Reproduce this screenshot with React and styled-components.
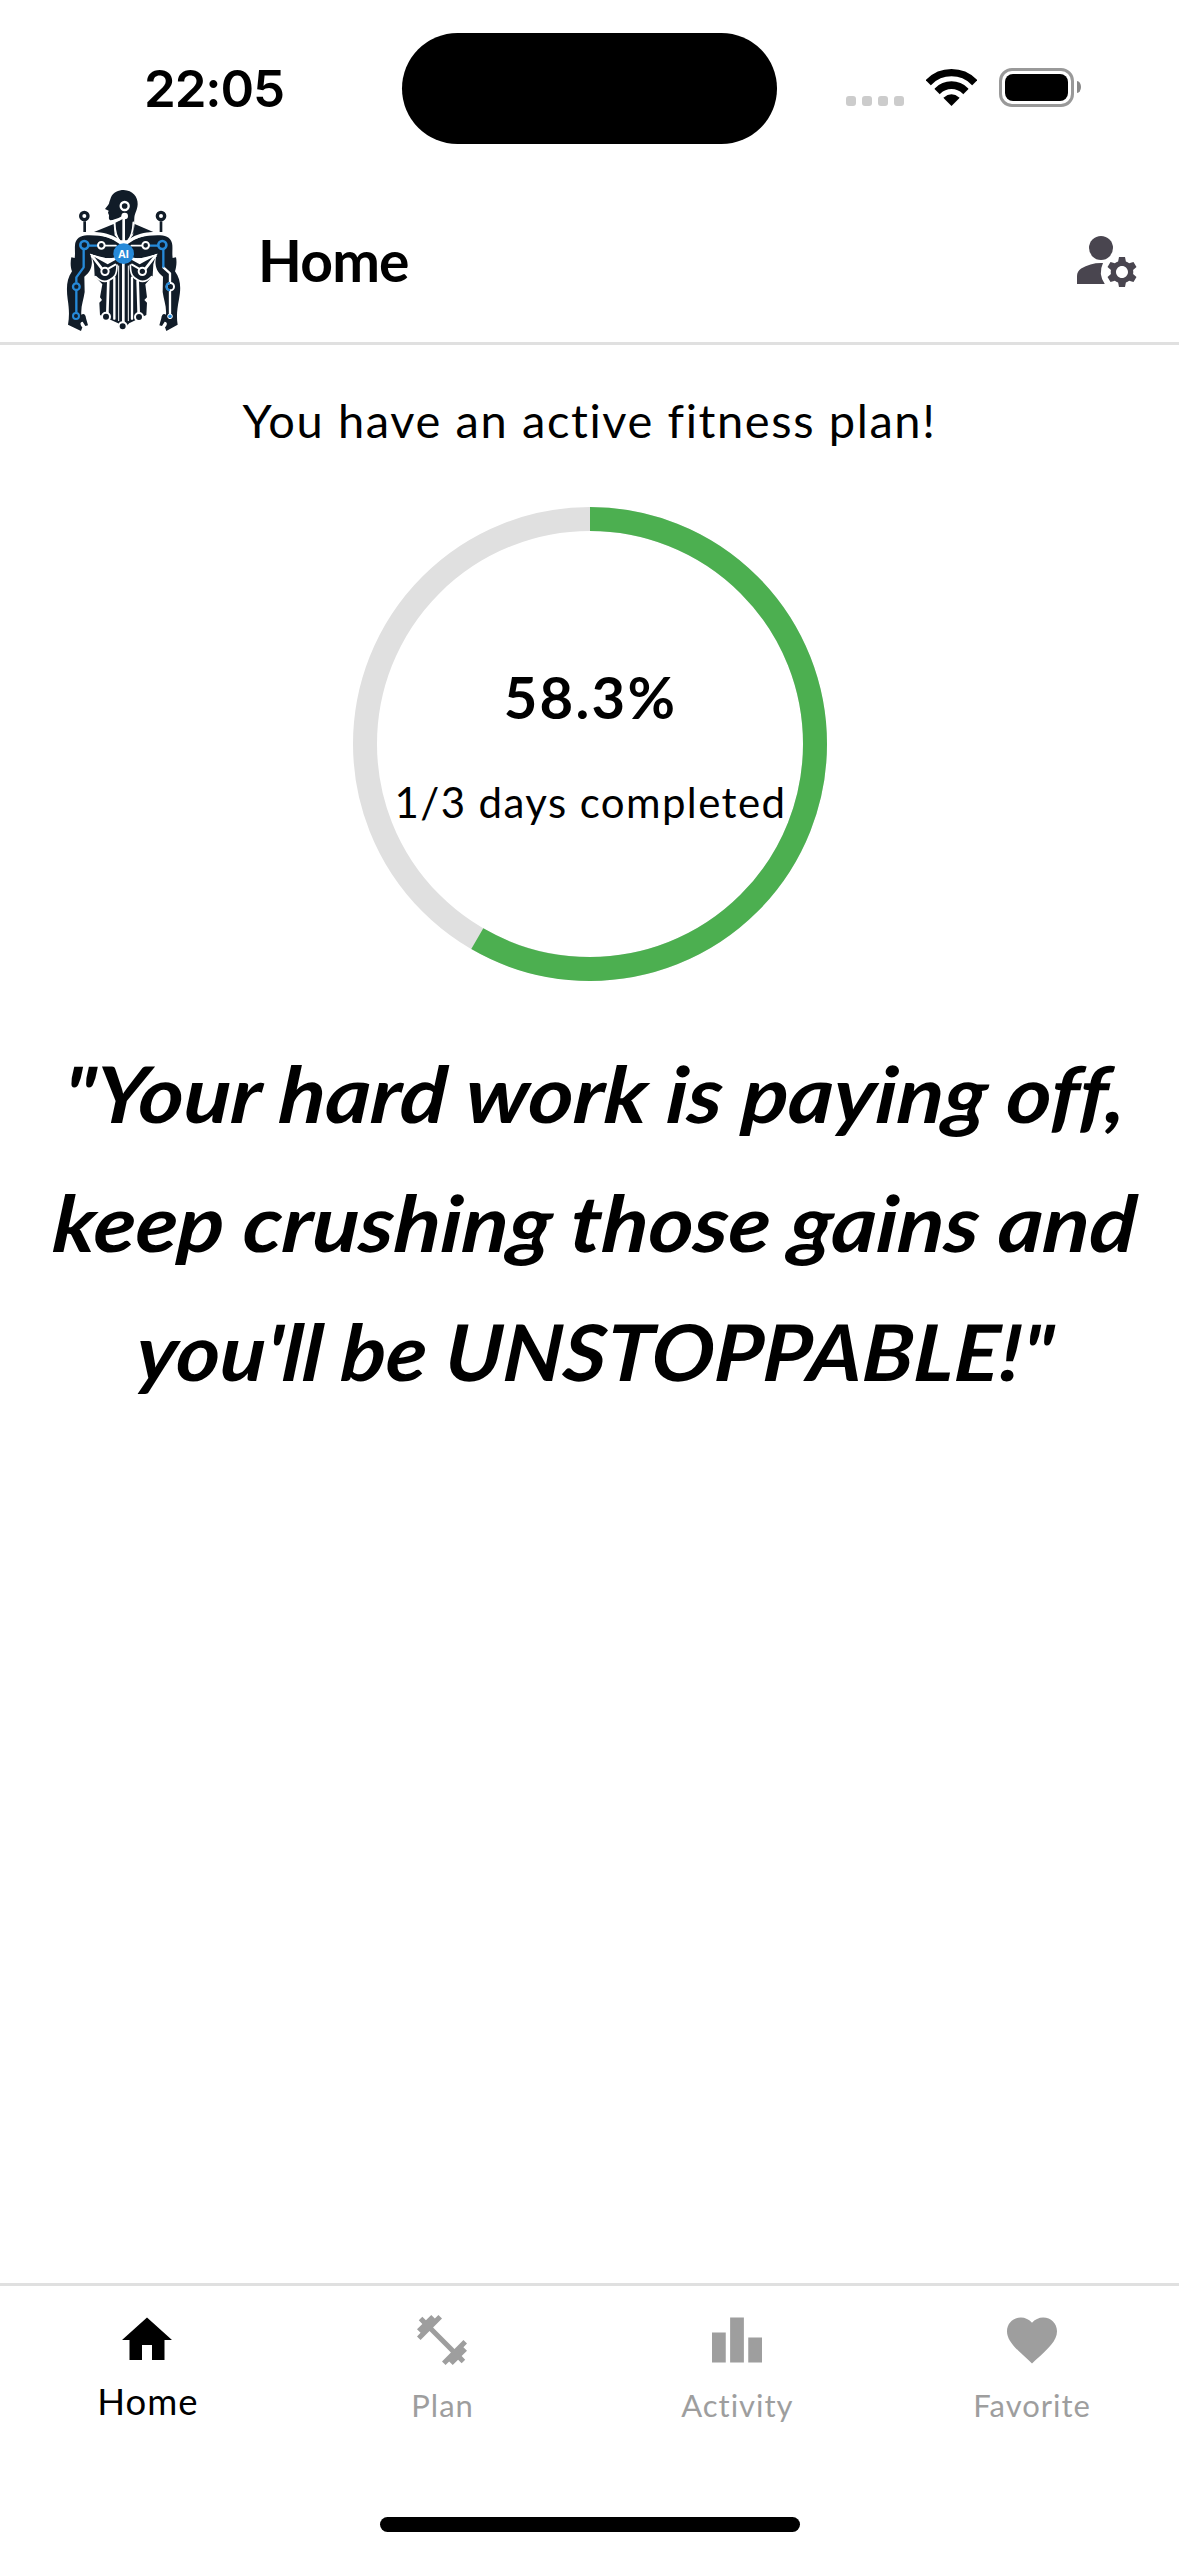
import React from "react";
import styled, { createGlobalStyle } from "styled-components";

const Global = createGlobalStyle`
  *, *::before, *::after { box-sizing: border-box; }
  html, body { margin: 0; padding: 0; background: #ffffff; }
  body { font-family: Lato, "Open Sans", sans-serif; color: #000000; }
`;

const Screen = styled.div`
  width: 1179px;
  height: 2556px;
  display: flex;
  flex-direction: column;
  background: #ffffff;
  overflow: hidden;
`;

const StatusBar = styled.div`
  flex: none;
  height: 177px;
  display: grid;
  grid-template-columns: 402px 375px 402px;
  align-items: start;
  padding-top: 33px;
`;

const Clock = styled.time`
  height: 111px;
  padding-left: 144px;
  font: 600 51px/111px Inter, sans-serif;
  letter-spacing: -1.1px;
`;

const Island = styled.div`
  height: 111px;
  border-radius: 56px;
  background: #000000;
`;

const StatusIcons = styled.div`
  height: 111px;
  display: flex;
  align-items: flex-start;
  padding: 35px 0 0 69px;
`;

const Dots = styled.div`
  display: flex;
  gap: 6px;
  margin: 28px 22px 0 0;
`;

const Dot = styled.i`
  width: 10px;
  height: 10px;
  border-radius: 3px;
  background: #cccccc;
`;

const WifiSvg = styled.svg`
  display: block;
  width: 51px;
  height: 39px;
  margin-right: 22px;
`;

const Battery = styled.div`
  width: 75px;
  height: 39px;
  padding: 3px;
  border: 3px solid #999999;
  border-radius: 13px;
`;

const BatteryFill = styled.div`
  height: 27px;
  border-radius: 8px;
  background: #000000;
`;

const BatteryCap = styled.div`
  width: 4px;
  height: 12px;
  margin: 13px 0 0 3px;
  border-radius: 0 4px 4px 0 / 0 6px 6px 0;
  background: #888888;
`;

const Header = styled.header`
  flex: none;
  height: 168px;
  display: flex;
  align-items: center;
  padding: 0 36px 0 40px;
  border-bottom: 3px solid #e0e0e0;
`;

const LogoSvg = styled.svg`
  display: block;
  width: 180px;
  height: 165px;
  flex: none;
`;

const Title = styled.h1`
  flex: 1;
  margin: 0 0 0 38px;
  font-size: 57px;
  line-height: 80px;
  font-weight: 700;
  letter-spacing: -0.8px;
`;

const AccountButton = styled.button`
  width: 72px;
  height: 72px;
  padding: 0;
  border: 0;
  background: none;
  color: #49454f;

  svg { display: block; width: 72px; height: 72px; fill: currentColor; }
`;

const Main = styled.main`
  flex: 1;
  display: flex;
  flex-direction: column;
  align-items: center;
  padding-top: 40px;
`;

const Lead = styled.p`
  margin: 0 0 52px;
  font-size: 47px;
  line-height: 70px;
  letter-spacing: 1.6px;
`;

const RingBox = styled.div`
  width: 474px;
  height: 474px;
  display: grid;
  place-items: center;

  > * { grid-area: 1 / 1; }
`;

const RingSvg = styled.svg`
  display: block;
  width: 474px;
  height: 474px;
`;

const RingText = styled.div`
  display: flex;
  flex-direction: column;
  align-items: center;
  gap: 31px;
`;

const Percent = styled.strong`
  font-size: 58px;
  line-height: 86px;
  font-weight: 700;
  letter-spacing: 2.3px;
  padding-left: 2px;
`;

const Days = styled.span`
  padding-left: 2px;
  font-size: 42px;
  line-height: 63px;
  letter-spacing: 1.4px;
  white-space: nowrap;
`;

const Quote = styled.blockquote`
  margin: 48px 0 0;
  padding-left: 12px;
  font-size: 78px;
  line-height: 129px;
  font-weight: 700;
  font-style: italic;
  text-align: center;
`;

const QuoteLine = styled.span`
  display: block;
  white-space: nowrap;
  font-variant-ligatures: none;
  transform: scaleX(${(p) => p.$stretch}) skewX(-4deg);
`;

const Nav = styled.nav`
  flex: none;
  height: 234px;
  display: grid;
  grid-template-columns: repeat(4, 1fr);
  border-top: 3px solid #e0e0e0;
`;

const NavItem = styled.a`
  display: flex;
  flex-direction: column;
  align-items: center;
  padding-top: 24px;
  color: ${(p) => (p.$active ? "#000000" : "#9e9e9e")};

  svg { display: block; width: 60px; height: 60px; fill: currentColor; }
`;

const NavLabel = styled.span`
  margin-top: 7px;
  padding-left: 1px;
  font-size: ${(p) => (p.$active ? 36.5 : 31)}px;
  line-height: ${(p) => (p.$active ? 48 : 56)}px;
  letter-spacing: 1px;
`;

const Indicator = styled.div`
  flex: none;
  align-self: center;
  width: 420px;
  height: 15px;
  margin: 0 0 24px;
  border-radius: 8px;
  background: #000000;
`;

const Wifi = () => (
  <WifiSvg viewBox="498 144 153 117" aria-hidden="true">
    <clipPath id="fan">
      <path d="M574.5 258 L440 124 H709 Z" />
    </clipPath>
    <g clipPath="url(#fan)" fill="none" stroke="#000">
      <circle cx="574.5" cy="254" r="96" strokeWidth="22" />
      <circle cx="574.5" cy="254" r="58.5" strokeWidth="23" />
      <circle cx="574.5" cy="254" r="31" fill="#000" stroke="none" />
    </g>
  </WifiSvg>
);

const INK = "#111c28";
const BLUE = "#2689d8";

const Logo = () => (
  <LogoSvg viewBox="0 21 540 495" aria-label="AI Fitness">
    <g fill={INK}>
      <path d="M213 82 C219 66 236 60 251 60 C278 61 294 80 293 103 C292 122 284 129 283 143 L281 188 L262 211 H240 L226 188 L223 160 L247 148 L212 151 C205 150 207 142 207 136 L204 128 L206 122 L195 117 C203 107 208 103 208 96 Z" />
      <path d="M162 186 L221 162 L224 196 L235 206 C212 193 190 187 162 186 Z" />
      <path d="M340 186 L284 162 L279 196 L268 206 C291 193 312 187 340 186 Z" />
      <path d="M105 226 C106 203 126 193 149 196 C190 196 220 206 241 220 L241 268 L226 267 C198 267 172 258 151 251 C160 276 157 303 133 320 L134 366 C131 389 122 408 124 434 C133 429 137 436 138 445 L144 466 L136 468 L128 455 C119 456 120 465 127 472 L123 483 L84 464 C88 440 88 420 83 388 C79 355 79 328 96 304 C91 291 91 275 94 262 L104 264 C106 250 104 239 105 226 Z" />
      <path d="M397 226 C396 203 376 193 353 196 C312 196 282 206 261 220 L261 268 L276 267 C304 267 330 258 351 251 C342 276 345 303 369 320 L368 366 C371 389 380 408 378 434 C369 429 365 436 364 445 L358 466 L366 468 L374 455 C383 456 382 465 375 472 L379 483 L413 464 C409 440 411 420 417 388 C423 355 423 328 405 304 C409 291 411 275 408 262 L398 264 C396 250 398 239 397 226 Z" />
      <path d="M154 256 L203 283 L241 262 V463 L180 435 L178 398 L186 390 L180 382 L187 343 L164 318 L162 283 Z" />
      <path d="M348 256 L299 283 L261 262 V463 L319 435 L321 398 L313 390 L321 382 L316 343 L338 318 L340 283 Z" />
      <path d="M236 265 H266 V461 L248 482 L236 462 Z" />
    </g>

    <g fill="none" stroke="#fff" strokeLinecap="round" strokeLinejoin="round">
      <path d="M251 140 V220" strokeWidth="8" />
      <path d="M253 139 C240 148 228 151 218 154" strokeWidth="8" />
      <path d="M224 158 C225 185 229 202 240 213" strokeWidth="5" />
      <path d="M280 157 C279 185 274 202 263 213" strokeWidth="5" />
      <path d="M162 190 C195 193 220 203 241 219" strokeWidth="7" />
      <path d="M340 190 C307 193 282 203 261 219" strokeWidth="7" />
      <path d="M184 227 H228 M274 227 H317" strokeWidth="5" />
      <path d="M151 253 C176 265 203 269 228 264" strokeWidth="3" />
      <path d="M351 253 C326 265 299 269 274 264" strokeWidth="3" />
      <path d="M156 258 L185 295 M346 258 L317 295" strokeWidth="8" />
      <path d="M205 296 L226 284 M297 296 L276 284" strokeWidth="6" />
      <path d="M167 320 C182 335 196 337 207 331 C223 323 231 316 231 285" strokeWidth="5" />
      <path d="M335 320 C320 335 306 337 295 331 C279 323 271 316 271 285" strokeWidth="5" />
      <path d="M250 282 V460" strokeWidth="8" />
      <path d="M205 333 L202 430 M293 333 L296 430" strokeWidth="8" />
      <path d="M223 323 V446 M276 323 V446" strokeWidth="7" />
      <path d="M236 288 V452 M265 288 V452" strokeWidth="3" />
      <path d="M370 292 L390 310 V438" strokeWidth="7" />
    </g>

    <g fill="none" stroke={BLUE} strokeWidth="7" strokeLinejoin="round">
      <path d="M144 227 H172 M330 227 H356" />
      <path d="M131 238 V292 L109 322 V338 M109 362 V428" />
      <path d="M370 238 V293" />
    </g>

    <g stroke={INK} strokeWidth="8">
      <path d="M134 154 V186 M363 154 V186" />
    </g>
    <g fill="#fff" stroke={INK} strokeWidth="10">
      <circle cx="133" cy="138" r="11" />
      <circle cx="363" cy="138" r="11" />
    </g>
    <g fill={INK} stroke="#fff" strokeWidth="6">
      <circle cx="184" cy="226" r="10" />
      <circle cx="317" cy="226" r="10" />
      <circle cx="195" cy="304" r="11" />
      <circle cx="307" cy="304" r="11" />
      <circle cx="198" cy="440" r="12" />
      <circle cx="297" cy="441" r="12" />
      <circle cx="248" cy="469" r="12" />
    </g>
    <circle cx="254" cy="108" r="12" fill={INK} stroke="#fff" strokeWidth="7" />
    <circle cx="254" cy="138" r="10" fill="#fff" />
    <g fill={INK} stroke={BLUE}>
      <circle cx="133" cy="225" r="12" strokeWidth="8" />
      <circle cx="367" cy="225" r="12" strokeWidth="8" />
      <circle cx="109" cy="350" r="10" strokeWidth="7" />
      <circle cx="108" cy="438" r="9" strokeWidth="6" />
    </g>
    <circle cx="391" cy="350" r="11" fill={INK} stroke="#fff" strokeWidth="6" />
    <path d="M390 336 A14 14 0 0 0 390 364 V357 A7 7 0 0 1 390 343 Z" fill={BLUE} />
    <circle cx="390" cy="439" r="7" fill={BLUE} stroke="#fff" strokeWidth="3" />
    <circle cx="251" cy="251" r="31" fill={BLUE} />
    <path d="M184 266 L224 263 V267 Z M318 266 L278 263 V267 Z" fill="#fff" />
    <text
      x="251"
      y="263"
      fill="#fff"
      fontFamily="Open Sans, sans-serif"
      fontWeight="700"
      fontSize="32"
      textAnchor="middle"
    >
      AI
    </text>
  </LogoSvg>
);

const CIRC = 2 * Math.PI * 225;

const Ring = ({ value }) => (
  <RingSvg viewBox="0 0 474 474" aria-hidden="true">
    <g fill="none" strokeWidth="24" transform="rotate(-90 237 237)">
      <circle cx="237" cy="237" r="225" stroke="#e0e0e0" />
      <circle
        cx="237"
        cy="237"
        r="225"
        stroke="#4caf50"
        strokeDasharray={`${CIRC * value} ${CIRC}`}
      />
    </g>
  </RingSvg>
);

const tabs = [
  {
    label: "Home",
    active: true,
    path: "M10 20v-6h4v6h5v-8h3L12 3 2 12h3v8z",
  },
  {
    label: "Plan",
    path: "M20.57 14.86 22 13.43 20.57 12 17 15.57 8.43 7 12 3.43 10.57 2 9.14 3.43 7.71 2 5.57 4.14 4.14 2.71 2.71 4.14 4.14 5.57 2 7.71 3.43 9.14 2 10.57 3.43 12 7 8.43 15.57 17 12 20.57 13.43 22 14.86 20.57 16.29 22 18.43 19.86 19.86 21.29 21.29 19.86 19.86 18.43 22 16.29z",
  },
  {
    label: "Activity",
    path: "M7.5 21H2V9h5.5v12zm7.25-18h-5.5v18h5.5V3zM22 11h-5.5v10H22V11z",
  },
  {
    label: "Favorite",
    path: "M12 21.35l-1.45-1.32C5.4 15.36 2 12.28 2 8.5 2 5.42 4.42 3 7.5 3c1.74 0 3.41.81 4.5 2.09C13.09 3.81 14.76 3 16.5 3 19.58 3 22 5.42 22 8.5c0 3.78-3.4 6.86-8.55 11.54L12 21.35z",
  },
];

export default function App() {
  return (
    <Screen>
      <Global />
      <StatusBar>
        <Clock>22:05</Clock>
        <Island />
        <StatusIcons>
          <Dots>
            <Dot />
            <Dot />
            <Dot />
            <Dot />
          </Dots>
          <Wifi />
          <Battery>
            <BatteryFill />
          </Battery>
          <BatteryCap />
        </StatusIcons>
      </StatusBar>

      <Header>
        <Logo />
        <Title>Home</Title>
        <AccountButton aria-label="Account settings">
          <svg viewBox="0 0 24 24">
            <circle cx="10" cy="8" r="4" />
            <path d="M10.67 13.02C10.45 13.01 10.23 13 10 13c-2.42 0-4.68.67-6.61 1.82-.88.52-1.39 1.5-1.39 2.53V20h9.26a6.963 6.963 0 0 1-.59-6.98z" />
            <path d="M20.75 16c0-.22-.03-.42-.06-.63l1.14-1.01-1-1.73-1.45.49c-.32-.27-.68-.48-1.08-.63L18 11h-2l-.3 1.49c-.4.15-.76.36-1.08.63l-1.45-.49-1 1.73 1.14 1.01c-.03.21-.06.41-.06.63s.03.42.06.63l-1.14 1.01 1 1.73 1.45-.49c.32.27.68.48 1.08.63L16 21h2l.3-1.49c.4-.15.76-.36 1.08-.63l1.45.49 1-1.73-1.14-1.01c.03-.21.06-.41.06-.63zM17 18c-1.1 0-2-.9-2-2s.9-2 2-2 2 .9 2 2-.9 2-2 2z" />
          </svg>
        </AccountButton>
      </Header>

      <Main>
        <Lead>You have an active fitness plan!</Lead>
        <RingBox>
          <Ring value={0.5833} />
          <RingText>
            <Percent>58.3%</Percent>
            <Days>1/3 days completed</Days>
          </RingText>
        </RingBox>
        <Quote>
          <QuoteLine $stretch={1.109}>"Your hard work is paying off,</QuoteLine>
          <QuoteLine $stretch={1.105}>keep crushing those gains and</QuoteLine>
          <QuoteLine $stretch={1.074}>you'll be UNSTOPPABLE!"</QuoteLine>
        </Quote>
      </Main>

      <Nav>
        {tabs.map((t) => (
          <NavItem key={t.label} $active={t.active}>
            <svg viewBox="0 0 24 24">
              <path d={t.path} />
            </svg>
            <NavLabel $active={t.active}>{t.label}</NavLabel>
          </NavItem>
        ))}
      </Nav>
      <Indicator />
    </Screen>
  );
}
